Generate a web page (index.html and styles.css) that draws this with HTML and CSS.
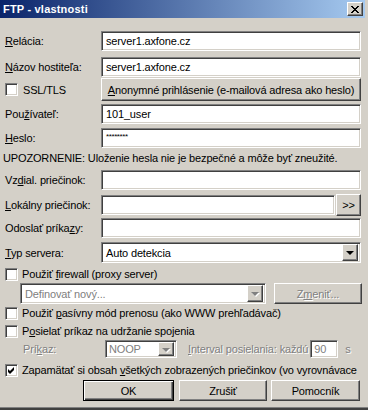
FILE: index.html
```html
<!DOCTYPE html>
<html lang="sk">
<head>
    <meta charset="UTF-8">
    <title>FTP - vlastnosti</title>
    <link rel="stylesheet" href="styles.css">
</head>
<body>
<div class="window">
    <div class="titlebar">
        <span class="title">FTP - vlastnosti</span>
        <div class="close raised">
            <svg width="8" height="7" viewBox="0 0 8 7"><path d="M0 0h2v1h1v1h2v-1h1v-1h2v1h-1v1h-1v1h-1v1h1v1h1v1h1v1h-2v-1h-1v-1h-2v1h-1v1h-2v-1h1v-1h1v-1h1v-1h-1v-1h-1v-1h-1z" fill="#000"/></svg>
        </div>
    </div>

    <div class="content">
        <div class="row r1">
            <span class="lbl"><u>R</u>elácia:</span>
            <div class="field sunken">server1.axfone.cz</div>
        </div>
        <div class="row r2">
            <span class="lbl"><u>N</u>ázov hostiteľa:</span>
            <div class="field sunken">server1.axfone.cz</div>
        </div>
        <div class="row r3">
            <span class="lbl check-lbl"><span class="box sunken"></span>SSL/TLS</span>
            <div class="btn raised wide"><u>A</u>nonymné prihlásenie (e-mailová adresa ako heslo)</div>
        </div>
        <div class="row r4">
            <span class="lbl">Pou<u>ž</u>ívateľ:</span>
            <div class="field sunken">101_user</div>
        </div>
        <div class="row r5">
            <span class="lbl"><u>H</u>eslo:</span>
            <div class="field sunken"><span class="stars">********</span></div>
        </div>
        <div class="row r6 note">UPOZORNENIE: Uloženie hesla nie je bezpečné a môže byť zneužité.</div>
        <div class="row r7">
            <span class="lbl">Vz<u>d</u>ial. priečinok:</span>
            <div class="field sunken"></div>
        </div>
        <div class="row r8">
            <span class="lbl"><u>L</u>okálny priečinok:</span>
            <div class="field sunken short"></div>
            <div class="btn raised browse">&gt;&gt;</div>
        </div>
        <div class="row r9">
            <span class="lbl">Odoslať príka<u>z</u>y:</span>
            <div class="field sunken"></div>
        </div>
        <div class="row r10">
            <span class="lbl"><u>T</u>yp servera:</span>
            <div class="field sunken combo">
                <span class="combo-text">Auto detekcia</span>
                <span class="arrow raised"><i class="tri"></i></span>
            </div>
        </div>
        <div class="row r11 check">
            <span class="box sunken"></span>
            <span>Použiť <u>f</u>irewall (proxy server)</span>
        </div>
        <div class="row r12">
            <div class="field sunken combo proxy">
                <span class="combo-text off">Definovať nový...</span>
                <span class="arrow raised"><i class="tri dim"></i></span>
            </div>
            <div class="btn raised change"><span class="off">Z<u>m</u>eniť...</span></div>
        </div>
        <div class="row r13 check">
            <span class="box sunken"></span>
            <span>Použiť <u>p</u>asívny mód prenosu (ako WWW prehľadávač)</span>
        </div>
        <div class="row r14 check">
            <span class="box sunken"></span>
            <span>P<u>o</u>sielať príkaz na udržanie spojenia</span>
        </div>
        <div class="row r15">
            <span class="off cmd-lbl">Prí<u>k</u>az:</span>
            <div class="field sunken combo noop">
                <span class="combo-text off">NOOP</span>
                <span class="arrow raised"><i class="tri dim"></i></span>
            </div>
            <span class="off interval"><u>I</u>nterval posielania: každú</span>
            <div class="field sunken secs"><span class="off">90</span></div>
            <span class="off unit">s</span>
        </div>
        <div class="row r16 check">
            <span class="box sunken checked">
                <svg width="7" height="7" viewBox="0 0 7 7"><path d="M6 0v3l-1 1l-1 1l-1 1l-1 1l-2-2v-3l2 2l4-4z" fill="#000"/></svg>
            </span>
            <span class="long">Zapamätať si obsah <u>v</u>šetkých zobrazených priečinkov (vo vyrovnávace</span>
        </div>
        <div class="row r17 buttons">
            <div class="btn default">OK</div>
            <div class="btn raised cancel">Zrušiť</div>
            <div class="btn raised help">Pomocník</div>
        </div>
    </div>
</div>
</body>
</html>
```

FILE: styles.css
```css
body {
    margin: 0;
    background-color: #d4d0c8;
    font-family: "Liberation Sans", Arial, sans-serif;
    font-size: 11px;
    letter-spacing: -0.15px;
    color: #000;
}
u {
    text-decoration: underline;
    text-underline-offset: 1px;
}
.window {
    width: 368px;
    height: 410px;
    box-sizing: border-box;
    border-bottom: 2px solid #404040;
    box-shadow: inset 0 -1px #808080;
    overflow: hidden;
}
.titlebar {
    width: 365px;
    height: 18px;
    background: linear-gradient(to right, #0a246a, #a6caf0);
    display: flex;
    align-items: center;
    justify-content: space-between;
}
.title {
    color: #fff;
    font-weight: bold;
    font-size: 11px;
    padding-left: 3px;
    letter-spacing: 0.2px;
}
.close {
    width: 16px;
    height: 14px;
    box-sizing: border-box;
    margin-right: 2px;
    display: flex;
    align-items: center;
    justify-content: center;
}
.raised {
    background-color: #d4d0c8;
    border: 1px solid;
    border-color: #fff #404040 #404040 #fff;
    box-shadow: inset -1px -1px #808080;
}
.sunken {
    background-color: #fff;
    border: 1px solid;
    border-color: #808080 #fff #fff #808080;
    box-shadow: inset 1px 1px #404040, inset -1px -1px #d4d0c8;
}
.content {
    padding: 13px 0 0 5px;
}
.row {
    display: flex;
    align-items: center;
    width: 356px;
}
.lbl {
    width: 96px;
    flex-shrink: 0;
    white-space: nowrap;
}
.field {
    box-sizing: border-box;
    flex: 1;
    height: 20px;
    padding: 0 4px;
    display: flex;
    align-items: center;
    white-space: nowrap;
}
.r1 { height: 20px; }
.r2 { height: 20px; margin-top: 6px; }
.r3 { height: 23px; margin-top: 1px; }
.r4 { height: 20px; margin-top: 3px; }
.r5 { height: 20px; margin-top: 4px; }
.r6 { height: 16px; margin-top: 2px; margin-left: -2px; }
.r7 { height: 20px; margin-top: 4px; }
.r8 { height: 22px; margin-top: 4px; }
.r9 { height: 20px; margin-top: 2px; }
.r10 { height: 21px; margin-top: 4px; }
.r11 { height: 16px; margin-top: 3px; }
.r12 { height: 21px; margin-top: 1px; padding-left: 15px; width: 342px; }
.r13 { height: 16px; margin-top: 1px; }
.r14 { height: 16px; margin-top: 2px; }
.r15 { height: 18px; margin-top: 1px; }
.r16 { height: 16px; margin-top: 4px; }
.r17 { height: 21px; margin-top: 2px; }

.check-lbl {
    display: flex;
    align-items: center;
}
.box {
    box-sizing: border-box;
    width: 13px;
    height: 13px;
    flex-shrink: 0;
    margin-right: 5px;
    display: flex;
    align-items: center;
    justify-content: center;
}
.check .box {
    margin-right: 4px;
}
.btn {
    box-sizing: border-box;
    display: flex;
    align-items: center;
    justify-content: center;
    white-space: nowrap;
}
.wide {
    flex: 1;
    height: 23px;
}
.stars {
    font-size: 8px;
    letter-spacing: -0.4px;
    align-self: flex-start;
    margin-top: 3px;
}
.short {
    flex: none;
    width: 234px;
}
.browse {
    width: 25px;
    height: 22px;
    margin-left: 1px;
    font-size: 11px;
}
.combo {
    height: 21px;
    padding: 2px 2px 2px 4px;
    justify-content: space-between;
}
.arrow {
    box-sizing: border-box;
    width: 16px;
    height: 17px;
    display: flex;
    align-items: center;
    justify-content: center;
}
.tri {
    width: 0;
    height: 0;
    border-left: 4px solid transparent;
    border-right: 4px solid transparent;
    border-top: 4px solid #000;
    margin-top: 1px;
}
.tri.dim {
    border-top-color: #808080;
    filter: drop-shadow(1px 1px 0 #fff);
}
.off {
    color: #808080;
    text-shadow: 1px 1px 0 #fff;
}
.proxy {
    flex: none;
    width: 246px;
}
.change {
    width: 88px;
    height: 21px;
    margin-left: 8px;
}
.cmd-lbl {
    width: 82px;
    padding-left: 18px;
    flex-shrink: 0;
}
.noop {
    flex: none;
    width: 72px;
    height: 18px;
    padding: 1px 2px 1px 3px;
}
.noop .arrow {
    height: 14px;
}
.interval {
    margin-left: 11px;
    white-space: nowrap;
}
.secs {
    flex: none;
    width: 28px;
    height: 18px;
    margin-left: 2px;
    padding: 0 3px;
}
.unit {
    margin-left: 7px;
}
.checked svg {
    display: block;
}
.long {
    white-space: nowrap;
}
.buttons {
    padding-left: 78px;
    width: 279px;
}
.default {
    width: 91px;
    height: 21px;
    border: 1px solid #000;
    background-color: #d4d0c8;
    box-shadow: inset 1px 1px #fff, inset -1px -1px #404040, inset -2px -2px #808080;
}
.cancel {
    width: 88px;
    height: 21px;
    margin-left: 5px;
}
.help {
    width: 89px;
    height: 21px;
    margin-left: 4px;
}
```
